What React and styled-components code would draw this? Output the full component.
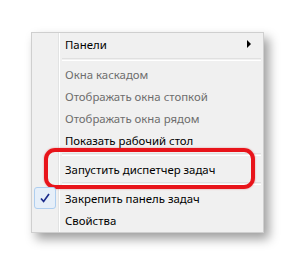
import React from 'react'
import styled, { createGlobalStyle } from 'styled-components'

const Global = createGlobalStyle`
    html, body {
        margin: 0;
        padding: 0;
        background: #ffffff;
    }
    body {
        width: 297px;
        height: 266px;
        overflow: hidden;
        font-family: "Noto Sans", "Open Sans", sans-serif;
    }
`

const Page = styled.div`
    padding: 32px 0 0 31px;
`

const Menu = styled.div`
    position: relative;
    width: 233px;
    box-sizing: border-box;
    border: 1px solid #cfcfcf;
    background: #f0f0f0;
    padding: 0 2px 1px 2px;
    box-shadow: 5px 6px 10px rgba(0, 0, 0, 0.38);
    display: flex;
    flex-direction: column;
`

const Gutter = styled.div`
    position: absolute;
    top: 0;
    bottom: 0;
    left: 26px;
    width: 2px;
    border-left: 1px solid #e2e3e3;
    border-right: 1px solid #ffffff;
    box-sizing: border-box;
`

const Row = styled.div`
    position: relative;
    height: 22px;
    display: flex;
    align-items: center;
    padding-left: 31px;
    padding-right: 10px;
    font-size: 11.4px;
    color: ${p => (p.disabled ? '#6d6d6d' : '#000000')};
`

const Label = styled.span`
    flex: 1;
    white-space: nowrap;
`

const Arrow = styled.span`
    width: 0;
    height: 0;
    border-top: 4px solid transparent;
    border-bottom: 4px solid transparent;
    border-left: 4px solid #000000;
`

const Separator = styled.div`
    height: ${p => p.h || 7}px;
    display: flex;
    align-items: center;
    padding-left: 28px;
    &::after {
        content: '';
        flex: 1;
        height: 1px;
        border-top: 1px solid #e0e0e0;
        border-bottom: 1px solid #ffffff;
    }
`

const Check = styled.span`
    position: absolute;
    left: 0;
    top: 0;
    width: 20px;
    height: 20px;
    border: 1px solid #aeceef;
    border-radius: 3px;
    background: #e6eff9;
    display: flex;
    align-items: center;
    justify-content: center;
`

const Highlight = styled.div`
    position: absolute;
    left: 10px;
    right: 6px;
    top: -10px;
    bottom: -9px;
    border: 4px solid #e8141a;
    border-radius: 11px;
    box-shadow: 0 0 2px rgba(200, 0, 0, 0.4);
    pointer-events: none;
`

export default function App() {
    return (
        <Page>
            <Global />
            <Menu>
                <Gutter />
                <Row>
                    <Label>Панели</Label>
                    <Arrow />
                </Row>
                <Separator h={8} />
                <Row disabled>
                    <Label>Окна каскадом</Label>
                </Row>
                <Row disabled>
                    <Label>Отображать окна стопкой</Label>
                </Row>
                <Row disabled>
                    <Label>Отображать окна рядом</Label>
                </Row>
                <Row>
                    <Label>Показать рабочий стол</Label>
                </Row>
                <Separator />
                <Row>
                    <Label>Запустить диспетчер задач</Label>
                    <Highlight />
                </Row>
                <Separator />
                <Row>
                    <Check>
                        <svg width="12" height="12" viewBox="0 0 12 12">
                            <path d="M2 6.5 L4.6 9.5 L10 2" fill="none" stroke="#1c2c8c" strokeWidth="1.7" />
                        </svg>
                    </Check>
                    <Label>Закрепить панель задач</Label>
                </Row>
                <Row>
                    <Label>Свойства</Label>
                </Row>
            </Menu>
        </Page>
    )
}
